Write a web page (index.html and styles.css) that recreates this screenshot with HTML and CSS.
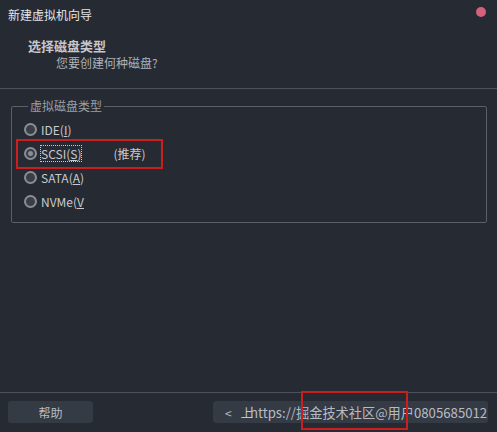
FILE: index.html
```html
<!DOCTYPE html>
<html lang="zh-CN">
<head>
    <meta charset="UTF-8">
    <title>新建虚拟机向导</title>
    <link rel="stylesheet" href="styles.css">
</head>
<body>
    <div class="wizard">
        <div class="title-bar">
            <span class="title">新建虚拟机向导</span>
            <span class="close-dot"></span>
        </div>

        <div class="header">
            <div class="step-title">选择磁盘类型</div>
            <div class="step-desc">您要创建何种磁盘?</div>
        </div>

        <div class="content">
            <fieldset class="group">
                <legend>虚拟磁盘类型</legend>
                <label class="radio-row"><span class="radio"></span><span>IDE(<u>I</u>)</span></label>
                <label class="radio-row"><span class="radio checked"></span><span class="focused">SCSI(<u>S</u>)</span><span class="hint">(推荐)</span></label>
                <label class="radio-row"><span class="radio"></span><span>SATA(<u>A</u>)</span></label>
                <label class="radio-row"><span class="radio"></span><span>NVMe(<u>V</u></span></label>
                <div class="mark mark-scsi"></div>
            </fieldset>
        </div>

        <div class="footer">
            <button class="btn btn-help">帮助</button>
            <button class="btn btn-nav"><span class="arrow">&lt;</span><span class="nav-text">上</span></button>
            <div class="watermark">https://掘金技术社区@用户0805685012</div>
            <div class="mark mark-footer"></div>
        </div>
    </div>
</body>
</html>
```

FILE: styles.css
```css
* {
    box-sizing: border-box;
}
body {
    margin: 0;
    background: #262a33;
    font-family: "Noto Sans CJK SC", "Noto Sans", sans-serif;
    font-size: 12px;
    color: #c9cbcf;
}
.wizard {
    position: relative;
    width: 497px;
    height: 432px;
    display: flex;
    flex-direction: column;
}
.title-bar {
    height: 30px;
    display: flex;
    align-items: center;
    justify-content: space-between;
    padding: 0 11px 2px 8px;
}
.title {
    color: #e4e5e8;
    font-size: 12px;
}
.close-dot {
    width: 10px;
    height: 10px;
    border-radius: 50%;
    background: #d4607a;
    margin-top: -4px;
}
.header {
    height: 59px;
    padding: 7px 0 0 28px;
    border-bottom: 1px solid #4b515b;
}
.step-title {
    font-weight: bold;
    font-size: 13px;
    color: #c5c7cb;
    line-height: 18px;
}
.step-desc {
    margin-left: 28px;
    color: #aeb1b6;
    line-height: 16px;
}
.content {
    flex: 1;
    padding: 10px 10px 0 11px;
}
.group {
    position: relative;
    margin: 0;
    height: 124px;
    padding: 4px 0 0 12px;
    border: 1px solid #5a5f69;
    border-radius: 2px;
}
.group legend {
    padding: 0 2px;
    margin-left: 4px;
    color: #9c9fa5;
    font-size: 12px;
    line-height: 14px;
}
.radio-row {
    display: flex;
    align-items: center;
    height: 24px;
    color: #c9cbcf;
}
.radio {
    width: 13px;
    height: 13px;
    border-radius: 50%;
    border: 2px solid #8b8e95;
    background: #3a3e47;
    margin-right: 4px;
    position: relative;
}
.radio.checked::after {
    content: "";
    position: absolute;
    left: 2px;
    top: 2px;
    width: 5px;
    height: 5px;
    border-radius: 50%;
    background: #8b8e95;
}
.focused {
    outline: 1px dotted #c9cbcf;
    outline-offset: 0;
    line-height: 15px;
}
.hint {
    margin-left: 32px;
}
.mark {
    position: absolute;
    border: 2px solid #cf1d1d;
}
.mark-scsi {
    left: 4px;
    top: 26px;
    width: 147px;
    height: 30px;
}
.footer {
    position: relative;
    height: 40px;
    border-top: 1px solid #4b515b;
    display: flex;
    align-items: flex-start;
    padding: 8px 9px 0 8px;
}
.btn {
    height: 22px;
    border: none;
    border-radius: 3px;
    background: #353b45;
    color: #b9bcc1;
    font-family: inherit;
    font-size: 12px;
    padding: 0;
}
.btn-help {
    width: 85px;
}
.btn-nav {
    margin-left: auto;
    width: 275px;
    display: flex;
    align-items: center;
    padding-left: 12px;
}
.arrow {
    margin-right: 9px;
}
.nav-text {
    color: #c4c6ca;
}
.watermark {
    position: absolute;
    left: 250px;
    top: 10px;
    color: rgba(220, 222, 226, 0.8);
    font-size: 13.2px;
    white-space: nowrap;
}
.mark-footer {
    left: 301px;
    top: -2px;
    width: 107px;
    height: 39px;
}
```
